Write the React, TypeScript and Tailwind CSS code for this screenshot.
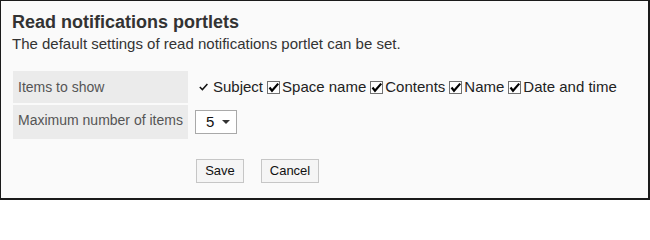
import React from "react";

const fields = ["Space name", "Contents", "Name", "Date and time"];

function CheckBox() {
  return (
    <svg width="13" height="13" viewBox="0 0 13 13" className="inline-block align-[-2px] ml-[4px] mr-[2px]">
      <rect x="0.5" y="0.5" width="12" height="12" fill="#fdfdfd" stroke="#707070" />
      <path d="M2.5 6.5 L5 9.7 L11.2 2.6" fill="none" stroke="#000" strokeWidth="2.2" />
    </svg>
  );
}

export default function App() {
  return (
    <div className="w-[650px] h-[200px] border-t border-l border-r-2 border-b-2 border-[#1a1a1a] bg-[#fafafa] pl-[11px] pt-[9px] font-['Liberation_Sans',Arial,sans-serif]">
      {/* Header */}
      <h1 className="text-[18px] leading-[24px] font-bold text-[#333]">Read notifications portlets</h1>
      <p className="text-[15px] leading-[20px] text-[#333]">
        The default settings of read notifications portlet can be set.
      </p>

      {/* Settings */}
      <div className="mt-[17px] ml-[1px] grid grid-cols-[175px_auto] gap-[2px]">
        <div className="h-[32px] bg-[#ebebeb] pl-[5px] pt-[6px] text-[14px] leading-[20px] text-[#555]">Items to show</div>
        <div className="pl-[5px] pt-[6px] text-[15px] leading-[20px] text-[#222] whitespace-nowrap">
          <svg width="9" height="8" viewBox="0 0 9 8" className="inline-block align-[1px] ml-[4px] mr-[5px]">
            <path d="M0.8 4 L3.4 6.6 L8.4 1" fill="none" stroke="#111" strokeWidth="1.5" />
          </svg>
          Subject
          {fields.map((f) => (
            <React.Fragment key={f}>
              <CheckBox />
              {f}
            </React.Fragment>
          ))}
        </div>

        <div className="h-[34px] bg-[#ebebeb] pl-[5px] pt-[5px] text-[14px] leading-[20px] text-[#555]">Maximum number of items</div>
        <div className="pl-[5px] pt-[5px]">
          <div className="w-[42px] h-[24px] border border-[#a9a9a9] bg-white flex items-center pl-[10px] text-[15px] text-[#111]">
            <span>5</span>
            <svg width="8" height="4" viewBox="0 0 8 4" className="ml-[8px]">
              <polygon points="0,0 8,0 4,4" fill="#333" />
            </svg>
          </div>
        </div>
      </div>

      {/* Actions */}
      <div className="mt-[20px] ml-[184px] flex text-[13px] text-[#111]">
        <button className="w-[48px] h-[24px] border border-[#c6c6c6] bg-[#f5f5f5]">Save</button>
        <button className="ml-[17px] w-[58px] h-[24px] border border-[#c6c6c6] bg-[#f5f5f5]">Cancel</button>
      </div>
    </div>
  );
}
